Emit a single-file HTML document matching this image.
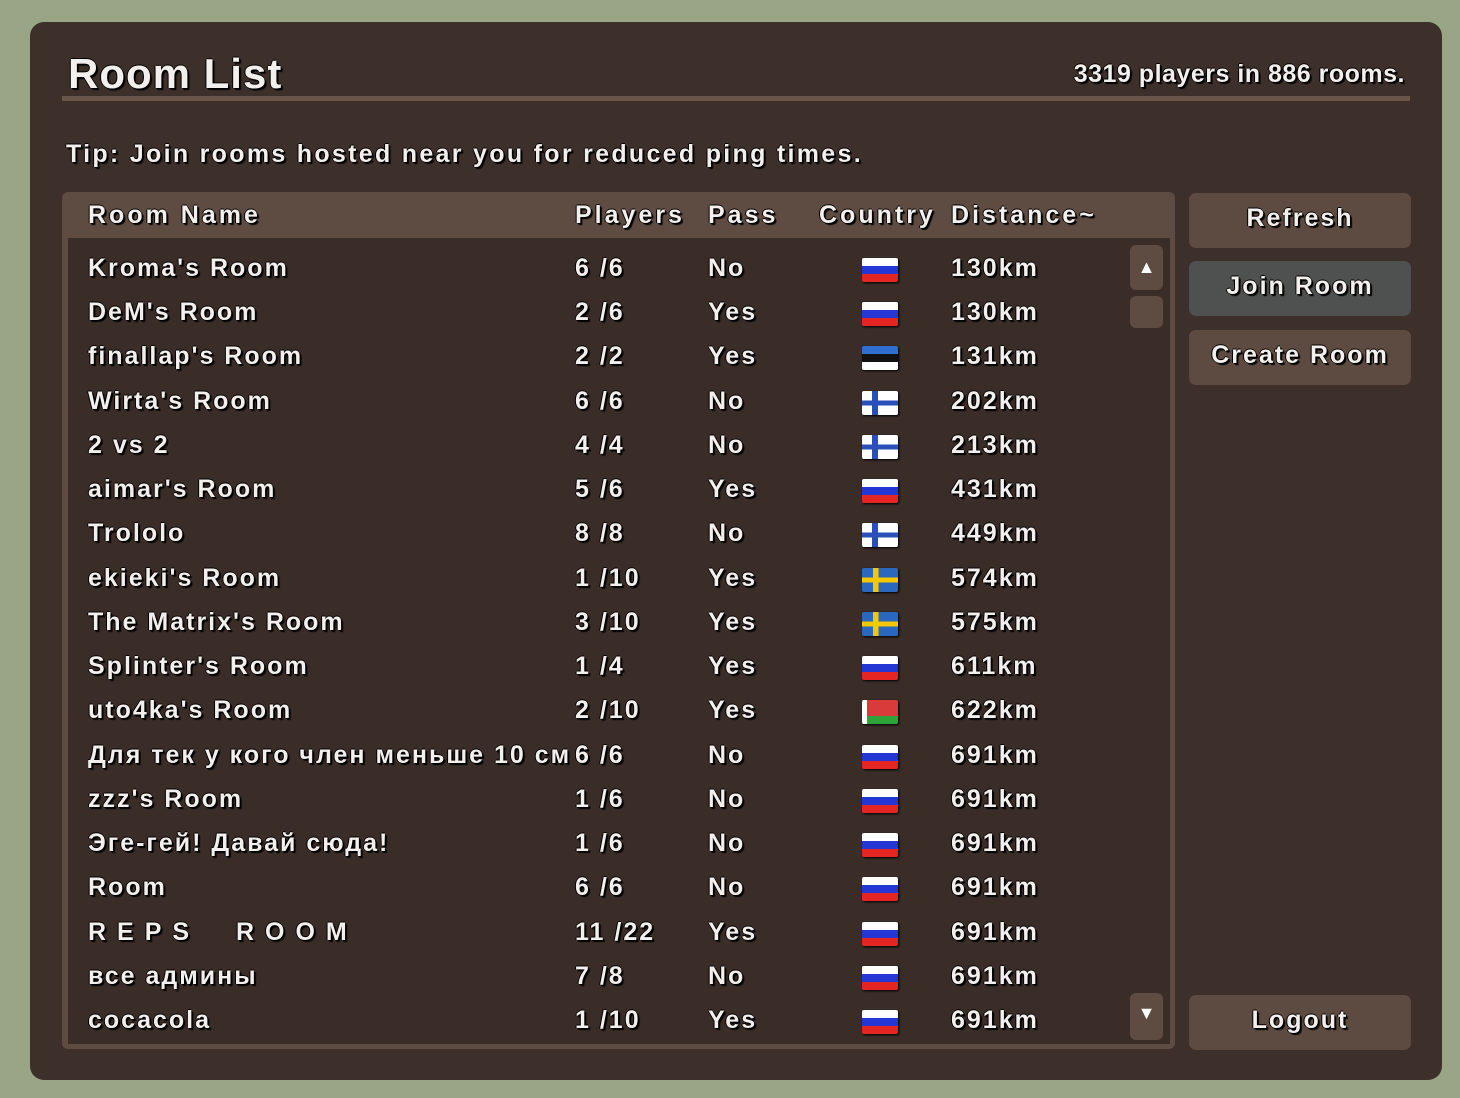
<!DOCTYPE html>
<html><head><meta charset="utf-8"><style>
body{margin:0;width:1460px;height:1098px;background:#9aa585;overflow:hidden;font-family:"Liberation Sans","DejaVu Sans",sans-serif;color:#f2efec}
.p{position:absolute;left:30px;top:22px;width:1412px;height:1058px;background:#3d302b;border-radius:14px}
.t{position:absolute;text-shadow:1px 1px 0 #000,-1px 0 0 #000,0 -1px 0 #000,2px 2px 1px #000;white-space:nowrap}
.b{position:absolute;left:1189px;width:222px;height:55px;background:#5d4b41;border-radius:7px;font-size:25px;font-weight:bold;letter-spacing:2px;text-align:center;line-height:50px}
.r{position:absolute;font-size:25px;font-weight:bold;letter-spacing:2px;height:44px;line-height:44px;left:0;width:1100px}
.r span{position:absolute;top:0}
.h{font-size:25px;font-weight:bold;letter-spacing:3px}
.f{position:absolute;left:862px;top:12px;width:36px;height:24px;border-radius:2px;box-shadow:1px 1px 2px #000}
.ru{background:linear-gradient(#fff 0 33%,#2436d4 33% 66%,#e52424 66%)}
.ee{background:linear-gradient(#2f6fd0 0 33%,#111 33% 66%,#fff 66%)}
.fi{background:linear-gradient(90deg,transparent 0 28%,#2a4fb8 28% 44%,transparent 44%),linear-gradient(#fff 0 40%,#2a4fb8 40% 60%,#fff 60%)}
.se{background:linear-gradient(90deg,transparent 0 30%,#f4c800 30% 46%,transparent 46%),linear-gradient(#2a68c0 0 40%,#f4c800 40% 60%,#2a68c0 60%)}
.by{background:linear-gradient(90deg,#fff 0 14%,transparent 14%),linear-gradient(#d93a3a 0 66%,#2ea33a 66%)}
</style></head><body>
<div class="p"></div>
<div class="t" style="left:68px;top:50px;font-size:42px;font-weight:bold;letter-spacing:1px">Room List</div>
<div class="t" style="right:55px;top:60px;font-size:25px;font-weight:bold;letter-spacing:0.5px">3319 players in 886 rooms.</div>
<div style="position:absolute;left:62px;top:96px;width:1348px;height:5px;background:#6a5549"></div>
<div class="t" style="left:66px;top:140px;font-size:25px;font-weight:bold;letter-spacing:2.3px">Tip: Join rooms hosted near you for reduced ping times.</div>
<div style="position:absolute;left:62px;top:192px;width:1113px;height:857px;background:#5e4c42;border-radius:6px"></div>
<div style="position:absolute;left:68px;top:238px;width:1102px;height:806px;background:#3a2d28"></div>
<div class="t h" style="left:88px;top:201px">Room Name</div>
<div class="t h" style="left:575px;top:201px">Players</div>
<div class="t h" style="left:708px;top:201px">Pass</div>
<div class="t h" style="left:819px;top:201px">Country</div>
<div class="t h" style="left:951px;top:201px">Distance~</div>
<div style="position:absolute;left:1130px;top:245px;width:33px;height:45px;background:#5e4c42;border-radius:6px;color:#fff;text-align:center;line-height:45px;font-size:18px">▲</div>
<div style="position:absolute;left:1130px;top:296px;width:33px;height:32px;background:#5e4c42;border-radius:6px"></div>
<div style="position:absolute;left:1130px;top:993px;width:33px;height:47px;background:#5e4c42;border-radius:6px;color:#fff;text-align:center;line-height:40px;font-size:18px">▼</div>
<div style="position:absolute;left:0;top:246px;width:1120px;height:800px;overflow:hidden">
<div class="r t" style="top:0"><span style="left:88px">Kroma's Room</span><span style="left:575px">6 /6</span><span style="left:708px">No</span><i class="f ru"></i><span style="left:951px">130km</span></div>
<div class="r t" style="top:44px"><span style="left:88px">DeM's Room</span><span style="left:575px">2 /6</span><span style="left:708px">Yes</span><i class="f ru"></i><span style="left:951px">130km</span></div>
<div class="r t" style="top:88px"><span style="left:88px">finallap's Room</span><span style="left:575px">2 /2</span><span style="left:708px">Yes</span><i class="f ee"></i><span style="left:951px">131km</span></div>
<div class="r t" style="top:133px"><span style="left:88px">Wirta's Room</span><span style="left:575px">6 /6</span><span style="left:708px">No</span><i class="f fi"></i><span style="left:951px">202km</span></div>
<div class="r t" style="top:177px"><span style="left:88px">2 vs 2</span><span style="left:575px">4 /4</span><span style="left:708px">No</span><i class="f fi"></i><span style="left:951px">213km</span></div>
<div class="r t" style="top:221px"><span style="left:88px">aimar's Room</span><span style="left:575px">5 /6</span><span style="left:708px">Yes</span><i class="f ru"></i><span style="left:951px">431km</span></div>
<div class="r t" style="top:265px"><span style="left:88px">Trololo</span><span style="left:575px">8 /8</span><span style="left:708px">No</span><i class="f fi"></i><span style="left:951px">449km</span></div>
<div class="r t" style="top:310px"><span style="left:88px">ekieki's Room</span><span style="left:575px">1 /10</span><span style="left:708px">Yes</span><i class="f se"></i><span style="left:951px">574km</span></div>
<div class="r t" style="top:354px"><span style="left:88px">The Matrix's Room</span><span style="left:575px">3 /10</span><span style="left:708px">Yes</span><i class="f se"></i><span style="left:951px">575km</span></div>
<div class="r t" style="top:398px"><span style="left:88px">Splinter's Room</span><span style="left:575px">1 /4</span><span style="left:708px">Yes</span><i class="f ru"></i><span style="left:951px">611km</span></div>
<div class="r t" style="top:442px"><span style="left:88px">uto4ka's Room</span><span style="left:575px">2 /10</span><span style="left:708px">Yes</span><i class="f by"></i><span style="left:951px">622km</span></div>
<div class="r t" style="top:487px"><span style="left:88px;width:484px;overflow:hidden;letter-spacing:2px">Для тек у кого член меньше 10 см</span><span style="left:575px">6 /6</span><span style="left:708px">No</span><i class="f ru"></i><span style="left:951px">691km</span></div>
<div class="r t" style="top:531px"><span style="left:88px">zzz's Room</span><span style="left:575px">1 /6</span><span style="left:708px">No</span><i class="f ru"></i><span style="left:951px">691km</span></div>
<div class="r t" style="top:575px"><span style="left:88px">Эге-гей! Давай сюда!</span><span style="left:575px">1 /6</span><span style="left:708px">No</span><i class="f ru"></i><span style="left:951px">691km</span></div>
<div class="r t" style="top:619px"><span style="left:88px">Room</span><span style="left:575px">6 /6</span><span style="left:708px">No</span><i class="f ru"></i><span style="left:951px">691km</span></div>
<div class="r t" style="top:664px"><span style="left:88px;letter-spacing:11px">REPS &nbsp;ROOM</span><span style="left:575px">11 /22</span><span style="left:708px">Yes</span><i class="f ru"></i><span style="left:951px">691km</span></div>
<div class="r t" style="top:708px"><span style="left:88px">все админы</span><span style="left:575px">7 /8</span><span style="left:708px">No</span><i class="f ru"></i><span style="left:951px">691km</span></div>
<div class="r t" style="top:752px"><span style="left:88px">cocacola</span><span style="left:575px">1 /10</span><span style="left:708px">Yes</span><i class="f ru"></i><span style="left:951px">691km</span></div>
</div>
<div class="b t" style="top:193px">Refresh</div>
<div class="b t" style="top:261px;background:#4f5050">Join Room</div>
<div class="b t" style="top:330px">Create Room</div>
<div class="b t" style="top:995px">Logout</div>
</body></html>
